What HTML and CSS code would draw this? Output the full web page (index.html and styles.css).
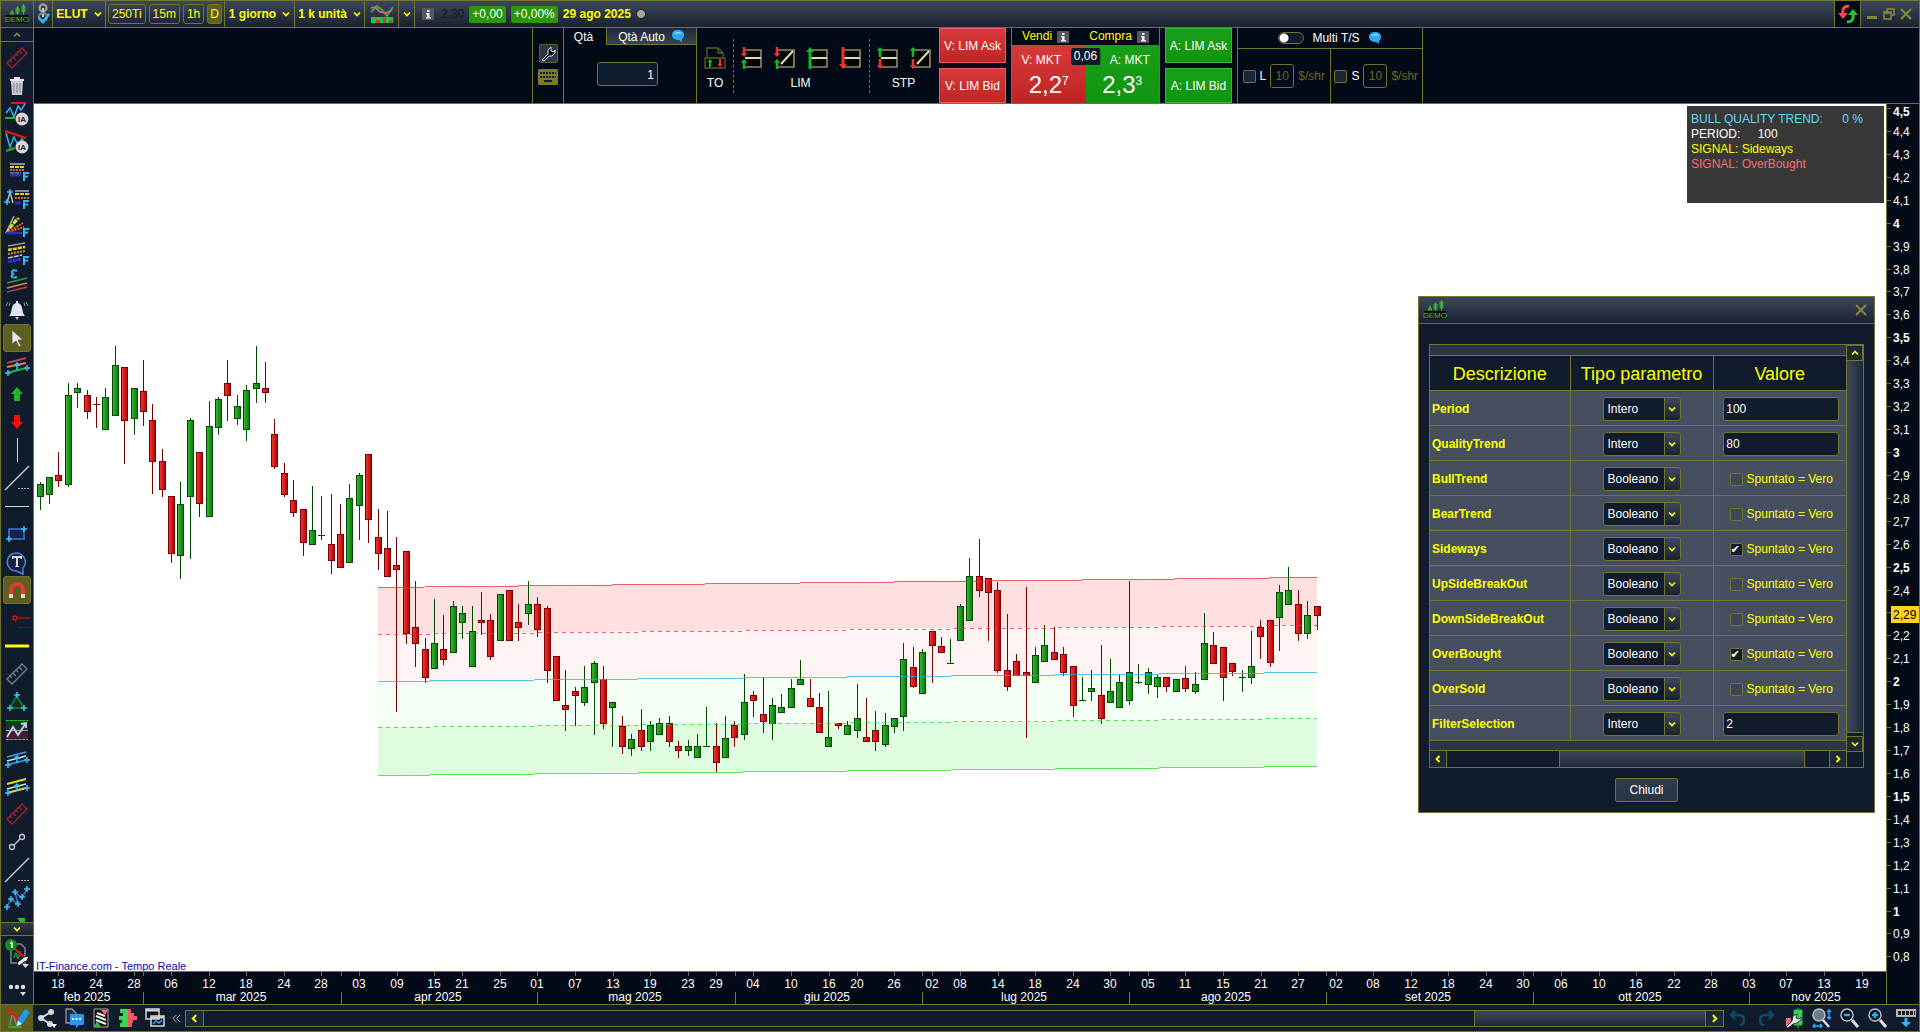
FILE: index.html
```html
<!DOCTYPE html>
<html lang="it">
<head>
    <meta charset="UTF-8">
    <title>ELUT - 1 giorno</title>
    <link rel="stylesheet" href="styles.css">
</head>
<body>
    <svg class="defs" width="0" height="0" aria-hidden="true">
        <defs>
            <linearGradient id="up"><stop offset="0" stop-color="#33b433"/><stop offset="1" stop-color="#0d7d0d"/></linearGradient>
            <linearGradient id="down"><stop offset="0" stop-color="#f03434"/><stop offset="1" stop-color="#b50606"/></linearGradient>
            <symbol id="demo" viewBox="0 0 24 20">
                <path d="M5 10l2-4 2 4zM11 4h3v5h-3zM17 2h3v6h-3zM12.500 2v9M18.500 0v11" fill="#2d8b2d" stroke="#49b749" stroke-width=".8"/>
                <rect x="1" y="11" width="22" height="8" fill="#061006"/>
                <text x="12" y="18" text-anchor="middle" font-size="8" fill="#55c832">DEMO</text>
            </symbol>
            <symbol id="chev" viewBox="0 0 8 8"><path d="M1 2.500l3 3 3-3" fill="none" stroke="#ff0" stroke-width="1.600"/></symbol>
            <symbol id="cross" viewBox="0 0 12 12"><path d="M1 1l10 10M11 1L1 11" stroke="#8a8a3a" stroke-width="2"/></symbol>
            <symbol id="info" viewBox="0 0 12 12"><rect width="12" height="12" fill="#55565e"/><path d="M5 2h2.500v2H5zM4 5h3.500v4H9v1.500H4V9h1V6.500H4z" fill="#eee"/></symbol>
            <symbol id="bubble" viewBox="0 0 14 14"><path d="M7 1c4 0 6 2 6 5 0 2-1 3-2 4v3l-3-2C4 11 1 9 1 6s2-5 6-5z" fill="#2aa9ff"/><path d="M3 5c1-2 6-3 8 0-3-1-5-1-8 0z" fill="#a8e4ff"/></symbol>
            <symbol id="ruler" viewBox="0 0 28 28"><path d="M4 19L19 4l5 5L9 24zM7 16l2 2M10 13l3 3M13 10l2 2M16 7l3 3" fill="none" stroke="currentColor" stroke-width="1.300"/></symbol>
            <symbol id="ia" viewBox="0 0 14 14"><circle cx="7" cy="7" r="6.500" fill="#d5d6dc"/><text x="7" y="10" font-size="8" font-weight="bold" text-anchor="middle" fill="#222">IA</text></symbol>
            <symbol id="f" viewBox="0 0 8 10"><path d="M1 1h6v2H3v1.500h3v2H3V10H1z" fill="#35b6f0"/></symbol>
            <symbol id="plus" viewBox="0 0 6 6"><path d="M3 0v6M0 3h6" stroke="#3cc3f5" stroke-width="1.500"/></symbol>
            <symbol id="au" viewBox="0 0 8 12"><path d="M4 0l4 4.500H5.500V12h-3V4.500H0z" fill="#16b81f"/></symbol>
            <symbol id="ad" viewBox="0 0 8 12"><path d="M4 12L0 7.500h2.500V0h3v7.500H8z" fill="#ee3030"/></symbol>
            <symbol id="box" viewBox="0 0 22 22"><path d="M5 3h16v17H5z" fill="#050604"/><path d="M5 3h16v17H5" fill="none" stroke="#8d8e68" stroke-width="1.600"/></symbol>
        </defs>
    </svg>

    <div class="app">
        <header class="topbar">
            <div class="cell logo"><svg width="24" height="20"><use href="#demo"/></svg></div>
            <div class="cell link">
                <svg width="15" height="22" viewBox="0 0 15 22"><circle cx="7" cy="5" r="3.500" fill="none" stroke="#999" stroke-width="2.500"/><path d="M7 5v9" stroke="#ccc" stroke-width="2"/><circle cx="7" cy="14" r="4" fill="none" stroke="#888" stroke-width="2"/><path d="M3 15l4 4 6-8" fill="none" stroke="#2bbcff" stroke-width="2.500"/></svg>
            </div>
            <button class="cell drop w53">ELUT <svg width="8" height="8"><use href="#chev"/></svg></button>
            <div class="cell frames">
                <button class="frame">250Ti</button>
                <button class="frame">15m</button>
                <button class="frame">1h</button>
                <button class="frame on">D</button>
            </div>
            <button class="cell drop w69">1 giorno <svg width="8" height="8"><use href="#chev"/></svg></button>
            <button class="cell drop w69">1 k unità <svg width="8" height="8"><use href="#chev"/></svg></button>
            <button class="cell style" aria-label="Stile grafico">
                <svg width="24" height="20" viewBox="0 0 24 20"><path d="M1 8l6-6 5 4 5 6 6-9" fill="none" stroke="#2fae50" stroke-width="1.800"/><path d="M1 4l4-1 5 5 6 1 6-3" fill="none" stroke="#ef5a6c" stroke-width="1.800"/><path d="M1 13h22v6H1z" fill="#14c73c"/><path d="M6 16h4v3H6zM13 14h3v5h-3zM19 16h3v3h-3z" fill="#d33"/></svg>
            </button>
            <button class="cell arrow" aria-label="Altri stili"><svg width="8" height="8"><use href="#chev"/></svg></button>
            <div class="quote">
                <svg width="12" height="12"><use href="#info"/></svg>
                <span class="last">2,30</span>
                <span class="chg">+0,00</span>
                <span class="chg">+0,00%</span>
                <b>29 ago 2025</b>
                <span class="dot"></span>
            </div>
            <div class="window-btns">
                <button class="sync" aria-label="Sincronizza"><svg width="20" height="20" viewBox="0 0 20 20"><path d="M11 2C6 2 4 5 5 10" fill="none" stroke="#f2484c" stroke-width="3"/><path d="M0 9h10l-5 6z" fill="#f2484c"/><path d="M9 18c5 0 7-3 6-8" fill="none" stroke="#2bc42b" stroke-width="3"/><path d="M20 11H10l5-6z" fill="#2bc42b"/></svg></button>
                <button aria-label="Riduci"><svg width="12" height="12" viewBox="0 0 12 12"><path d="M1 9.500h10" stroke="#8a8a3a" stroke-width="3"/></svg></button>
                <button aria-label="Ripristina"><svg width="12" height="12" viewBox="0 0 12 12"><path d="M4 4V1h7v6H8M1 4h7v7H1zM1 5h7" fill="none" stroke="#8a8a3a" stroke-width="1.500"/></svg></button>
                <button aria-label="Chiudi finestra"><svg width="12" height="12"><use href="#cross"/></svg></button>
            </div>
        </header>

        <nav class="rail">
            <button class="rail-up" aria-label="Su"><svg width="8" height="8" viewBox="0 0 8 8"><path d="M1 5.500l3-3 3 3" fill="none" stroke="#8a8a3a" stroke-width="1.600"/></svg></button>
            <div class="tools">
                <button class="crimson"><svg><use href="#ruler"/></svg></button>
                <button><svg viewBox="0 0 28 28"><path d="M8 9h12l-1 14H9z" fill="#c9ccd2"/><path d="M7 7h14v2H7zM11 5h6v2h-6z" fill="#e4e6ea"/><path d="M11 11v10M14 11v10M17 11v10" stroke="#777b84"/></svg></button>
                <button><svg viewBox="0 0 28 28"><path d="M8 3h15" stroke="#f11" stroke-width="2"/><path d="M3 13l4-5 4 9 4-11 3 4 4-6" fill="none" stroke="#38b4ee" stroke-width="1.500"/><path d="M2 18h10" stroke="#1db52a" stroke-width="2"/><use href="#ia" x="12" y="12" width="14" height="14"/></svg></button>
                <button><svg viewBox="0 0 28 28"><path d="M3 5l4 14 4-10 4 8 4-6 4 7" fill="none" stroke="#38b4ee" stroke-width="1.500"/><path d="M2 3l21 7" stroke="#f11" stroke-width="2"/><path d="M3 23l9-3" stroke="#1db52a" stroke-width="2"/><use href="#ia" x="12" y="12" width="14" height="14"/></svg></button>
                <button><svg viewBox="0 0 28 28"><path d="M7 8h15" stroke="#8b8b8b" stroke-width="2"/><path d="M7 11h15" stroke="#e8d21c" stroke-width="2" stroke-dasharray="4 1"/><path d="M7 14h15" stroke="#e0661c" stroke-width="2" stroke-dasharray="2 1"/><path d="M7 17h11" stroke="#ccd" stroke-dasharray="4 1"/><path d="M7 19h11" stroke="#2733b8" stroke-width="3"/><use href="#f" x="19" y="15" width="8" height="10"/></svg></button>
                <button><svg viewBox="0 0 28 28"><path d="M12 7h14" stroke="#8b8b8b" stroke-width="2"/><path d="M12 10h14" stroke="#e8d21c" stroke-width="2" stroke-dasharray="4 1"/><path d="M12 14h14" stroke="#e0661c" stroke-width="2" stroke-dasharray="2 1"/><path d="M12 19h6" stroke="#2733b8" stroke-width="3"/><path d="M4 19L7 8l3 11" fill="none" stroke="#bbb" stroke-width="1.500"/><use href="#plus" x="4" y="5" width="6" height="6"/><use href="#plus" x="1" y="15" width="6" height="6"/><use href="#f" x="19" y="15" width="8" height="10"/></svg></button>
                <button><svg viewBox="0 0 28 28"><path d="M3 21L11 4" stroke="#aaa" stroke-width="1.500"/><path d="M3 21L16 6M3 21L14 6" stroke="#e8e01c" stroke-width="2" stroke-dasharray="5 1"/><path d="M3 21l17-10M3 21l18-6" stroke="#e0661c" stroke-width="2" stroke-dasharray="2 1"/><path d="M3 21h16" stroke="#2733b8" stroke-width="2.500"/><use href="#f" x="19" y="15" width="8" height="10"/></svg></button>
                <button><svg viewBox="0 0 28 28"><path d="M5 6l17-3" stroke="#999" stroke-width="1.500"/><path d="M5 10l17-3" stroke="#e8d21c" stroke-width="2.500" stroke-dasharray="4 1"/><path d="M5 14l17-3" stroke="#e8861c" stroke-width="2" stroke-dasharray="2 1"/><path d="M5 18l14-3" stroke="#ccd" stroke-width="1.500" stroke-dasharray="5 1"/><path d="M5 22l13-3" stroke="#2733d8" stroke-width="2.500"/><use href="#f" x="19" y="15" width="8" height="10"/></svg></button>
                <button><svg viewBox="0 0 28 28"><path d="M14 3c-5-2-7 2-3 3-4 1-3 5 3 3" fill="none" stroke="#35b6f0" stroke-width="2"/><path d="M4 15l20-5" stroke="#2ca045" stroke-width="1.600"/><path d="M4 20l20-5" stroke="#ef7d36" stroke-width="1.600"/><path d="M4 24l20-5" stroke="#b8434d" stroke-width="1.600"/></svg></button>
                <button><svg viewBox="0 0 28 28"><path d="M6 20c3-2 2-10 5-12l2-1V5h2v2l2 1c3 2 2 10 5 12z" fill="#dfe5ee"/><path d="M12 21h4l-2 3z" fill="#b5bdc9"/><path d="M5 6L3 10M7 7L6 10M23 6l2 4M21 7l1 3" stroke="#8d96a5"/></svg></button>
                <button class="on"><svg viewBox="0 0 28 28"><path d="M9 6v14l4-3 3 6 2-1-3-6h5z" fill="#e9e9e4" stroke="#555" stroke-width=".8"/></svg></button>
                <button><svg viewBox="0 0 28 28"><path d="M4 11l19-5" stroke="#b8434d" stroke-width="2"/><path d="M4 15l19-4" stroke="#ef7d36" stroke-width="2"/><path d="M4 21l19-5" stroke="#1db52a" stroke-width="2"/><path d="M14 18v-7m-3 3l3-3 3 3" stroke="#3cc3f5" stroke-width="1.500" fill="none"/><use href="#plus" x="2" y="18" width="6" height="6"/><use href="#plus" x="21" y="13" width="6" height="6"/></svg></button>
                <button><svg viewBox="0 0 28 28"><path d="M14 7l6 7h-3v7h-6v-7H8z" fill="#23b52c"/></svg></button>
                <button><svg viewBox="0 0 28 28"><path d="M14 21l-6-7h3V7h6v7h3z" fill="#fb0a0a"/></svg></button>
                <button><svg viewBox="0 0 28 28"><path d="M14.500 2v24" stroke="#d4d4d4"/></svg></button>
                <button><svg viewBox="0 0 28 28"><path d="M2 26L26 2" stroke="#d4d4d4" stroke-width="1.300"/><path d="M15 24.500h11" stroke="#aaa" stroke-dasharray="2 1"/></svg></button>
                <button><svg viewBox="0 0 28 28"><path d="M2 14.500h24" stroke="#d4d4d4"/></svg></button>
                <button><svg viewBox="0 0 28 28"><rect x="6" y="9" width="15" height="10" fill="#12254c" stroke="#4474d8" stroke-width="1.500"/><use href="#plus" x="18" y="6" width="6" height="6"/><use href="#plus" x="3" y="16" width="6" height="6"/></svg></button>
                <button><svg viewBox="0 0 28 28"><path d="M20 20a9 9 0 1 0-7 3l7 3z" fill="#14233d" stroke="#4f7fe0" stroke-width="1.500"/><path d="M9 8h10v3h-1l-1-1h-2v8h1v1h-4v-1h1v-8h-2l-1 1H9z" fill="#ddd"/></svg></button>
                <button class="on"><svg viewBox="0 0 28 28"><path d="M8 18v-4a6 6 0 0 1 12 0v4" fill="none" stroke="#e33b2c" stroke-width="4"/><path d="M6 18h4v4H6zM18 18h4v4h-4z" fill="#ddd"/></svg></button>
                <button><svg viewBox="0 0 28 28"><circle cx="12" cy="14" r="2" fill="none" stroke="#e11" stroke-width="1.300"/><path d="M14 14h13" stroke="#e11"/><path d="M15 23.500h11" stroke="#811" stroke-dasharray="2 1"/></svg></button>
                <button><svg viewBox="0 0 28 28"><path d="M2 14h24" stroke="#ff0" stroke-width="3"/></svg></button>
                <button class="grey"><svg><use href="#ruler"/></svg></button>
                <button><svg viewBox="0 0 28 28"><path d="M13.500 8L7 20h14z" fill="#0c2c1c" stroke="#178a2a" stroke-width="1.500"/><use href="#plus" x="11" y="4" width="6" height="6"/><use href="#plus" x="4" y="17" width="6" height="6"/><use href="#plus" x="18" y="17" width="6" height="6"/></svg></button>
                <button><svg viewBox="0 0 28 28"><path d="M3 5h22v9H3z" fill="#123a24"/><path d="M3 14h22v9H3z" fill="#402030"/><path d="M3 4.500h22" stroke="#2c2" stroke-dasharray="3 1"/><path d="M3 23.500h22" stroke="#f67" stroke-dasharray="3 1"/><path d="M3 14.500h22" stroke="#a9a"/><path d="M4 21l6-10 5 8 8-12m-5 1l5-1v5" fill="none" stroke="#c8ccf0" stroke-width="1.800"/></svg></button>
                <button><svg viewBox="0 0 28 28"><path d="M4 13l19-5M4 21l19-5" stroke="#3c9be0" stroke-width="1.800"/><path d="M4 17l19-5" stroke="#ddd" stroke-width="1.500"/><path d="M14 19v-7m-3 3l3-3 3 3" stroke="#3cc3f5" stroke-width="1.500" fill="none"/><use href="#plus" x="2" y="18" width="6" height="6"/><use href="#plus" x="21" y="13" width="6" height="6"/></svg></button>
                <button><svg viewBox="0 0 28 28"><path d="M4 12l19-5M4 21l19-5" stroke="#dfe01c" stroke-width="2"/><path d="M4 17l19-5" stroke="#ddd" stroke-width="1.500"/><path d="M14 19v-7m-3 3l3-3 3 3" stroke="#3cc3f5" stroke-width="1.500" fill="none"/><use href="#plus" x="2" y="18" width="6" height="6"/><use href="#plus" x="21" y="13" width="6" height="6"/></svg></button>
                <button class="crimson"><svg><use href="#ruler"/></svg></button>
                <button><svg viewBox="0 0 28 28"><g fill="none" stroke="#c9c9c9" stroke-width="1.300"><circle cx="9" cy="19" r="2.500"/><circle cx="19" cy="9" r="2.500"/><path d="M11 17l6-6"/></g></svg></button>
                <button><svg viewBox="0 0 28 28"><path d="M2 26L26 2" stroke="#d4d4d4" stroke-width="1.300"/><path d="M15 24.500h11" stroke="#aaa" stroke-dasharray="2 1"/></svg></button>
                <button><svg viewBox="0 0 28 28"><path d="M4 23l4-8 7 5-3-12 7 6 5-9" fill="none" stroke="#3a76d8" stroke-width="1.500"/><use href="#plus" x="1" y="20" width="6" height="6"/><use href="#plus" x="5" y="12" width="6" height="6"/><use href="#plus" x="12" y="17" width="6" height="6"/><use href="#plus" x="9" y="5" width="6" height="6"/><use href="#plus" x="16" y="10" width="6" height="6"/><use href="#plus" x="21" y="2" width="6" height="6"/></svg></button>
                <button><svg viewBox="0 0 28 28"><path d="M14 6h8v10z" fill="#2cb84a"/></svg></button>
            </div>
            <button class="rail-down" aria-label="Giù"><svg width="8" height="8"><use href="#chev"/></svg></button>
            <div class="rail-end">
                <button><svg viewBox="0 0 28 34"><path d="M8 8h10l4 4v15H8z" fill="none" stroke="#7e858f" stroke-width="1.500"/><path d="M11 22c1-5 2-7 3-2s2 2 3-5" fill="none" stroke="#2a8f45" stroke-width="1.500"/><path d="M12 13l10 9" stroke="#e11" stroke-width="2"/><path d="M14 27l7-6 5-1-2 5-3 1-5 4z" fill="#eee" stroke="#111"/><circle cx="8" cy="9" r="6" fill="#18891f"/><path d="M9 6v6M7 7.500L9 6" stroke="#fff" stroke-width="1.500"/><path d="M19 28h7l-3.500 4z" fill="#ddd"/></svg></button>
                <button><svg viewBox="0 0 28 34"><circle cx="8" cy="17" r="2.200" fill="#ddd"/><circle cx="14" cy="17" r="2.200" fill="#ddd"/><circle cx="20" cy="17" r="2.200" fill="#ddd"/><path d="M17 22h6l-3 4z" fill="#ddd"/></svg></button>
            </div>
        </nav>

        <section class="trade">
            <div class="trade-tools">
                <button class="wrench" aria-label="Impostazioni"><svg width="16" height="16" viewBox="0 0 16 16"><path d="M2 14l6-6V4l3-3v4l3 1 1-2v3l-3 3H9l-5 5z" fill="#05080f" stroke="#e8e8e8"/></svg></button>
                <button class="keys" aria-label="Tastiera"><svg width="20" height="16" viewBox="0 0 20 16"><rect width="20" height="16" rx="2" fill="#7a7a34"/><path d="M2 4h16M2 8h16" stroke="#101b2b" stroke-width="2" stroke-dasharray="2 1"/><path d="M6 12h8" stroke="#101b2b" stroke-width="2"/></svg></button>
            </div>
            <div class="qty">
                <div class="tabs">
                    <button class="tab on">Qtà</button>
                    <button class="tab">Qtà Auto <svg width="14" height="14"><use href="#bubble"/></svg></button>
                </div>
                <input class="qty-box" type="text" value="1" aria-label="Quantità">
            </div>
            <div class="orders">
                <div class="group">
                    <div class="icons"><button aria-label="TO"><svg width="22" height="22" viewBox="0 0 22 22"><path d="M1 11h20v10H1z" fill="#050604"/><path d="M3 11V1h11l5 5v5M14 1v5h5M1 11h20v10H1z" fill="none" stroke="#5c5c28" stroke-width="1.300"/><use href="#au" x="2" y="12" width="8" height="8"/><use href="#ad" x="12" y="12" width="8" height="8"/></svg></button></div>
                    <span>TO</span>
                </div>
                <div class="group sep">
                    <div class="icons">
                        <button aria-label="LIM 1"><svg width="22" height="22"><use href="#box"/><path d="M5 11h16" stroke="#dcdcae" stroke-width="2"/><use href="#ad" x="0" y="0" width="8" height="10"/><use href="#au" x="0" y="12" width="8" height="10"/></svg></button>
                        <button aria-label="LIM 2"><svg width="22" height="22"><use href="#box"/><path d="M8 17L20 4" stroke="#dcdcae" stroke-width="2"/><use href="#ad" x="0" y="0" width="8" height="10"/><use href="#au" x="0" y="12" width="8" height="10"/></svg></button>
                        <button aria-label="LIM 3"><svg width="22" height="22"><use href="#box"/><path d="M5 11h16" stroke="#dcdcae" stroke-width="2"/><path d="M4 0l4 5H5.500v17h-3V5H0z" fill="#16b81f"/></svg></button>
                        <button aria-label="LIM 4"><svg width="22" height="22"><use href="#box"/><path d="M5 11h16" stroke="#dcdcae" stroke-width="2"/><path d="M4 22l-4-5h2.500V0h3v17H8z" fill="#ee3030"/></svg></button>
                    </div>
                    <span>LIM</span>
                </div>
                <div class="group sep">
                    <div class="icons">
                        <button aria-label="STP 1"><svg width="22" height="22"><use href="#box"/><path d="M5 11h16" stroke="#dcdcae" stroke-width="2"/><use href="#au" x="0" y="0" width="8" height="10"/><use href="#ad" x="0" y="12" width="8" height="10"/></svg></button>
                        <button aria-label="STP 2"><svg width="22" height="22"><use href="#box"/><path d="M8 17L20 4" stroke="#dcdcae" stroke-width="2"/><use href="#au" x="0" y="0" width="8" height="10"/><use href="#ad" x="0" y="12" width="8" height="10"/></svg></button>
                    </div>
                    <span>STP</span>
                </div>
            </div>
            <div class="pair">
                <button class="sell">V: LIM Ask</button>
                <button class="sell">V: LIM Bid</button>
            </div>
            <div class="market">
                <div class="market-head">
                    <span>Vendi <svg width="12" height="12"><use href="#info"/></svg></span>
                    <span>Compra <svg width="12" height="12"><use href="#info"/></svg></span>
                </div>
                <div class="market-body">
                    <button class="mkt red"><small>V: MKT</small><span class="px">2,2<sup>7</sup></span></button>
                    <button class="mkt green"><small>A: MKT</small><span class="px">2,3<sup>3</sup></span></button>
                    <span class="spread">0,06</span>
                </div>
            </div>
            <div class="pair">
                <button class="buy">A: LIM Ask</button>
                <button class="buy">A: LIM Bid</button>
            </div>
            <div class="multi">
                <div class="multi-head">
                    <label class="switch"><input type="checkbox" aria-label="Multi T/S"><i></i></label>
                    Multi T/S
                    <svg width="14" height="14"><use href="#bubble"/></svg>
                </div>
                <div class="multi-body">
                    <div class="leg"><label><input type="checkbox">L</label><input class="amt" type="text" value="10" aria-label="L"><span>$/shr</span></div>
                    <div class="leg"><label><input type="checkbox">S</label><input class="amt" type="text" value="10" aria-label="S"><span>$/shr</span></div>
                </div>
            </div>
        </section>

        <main class="chart">
            <svg id="plot"></svg>
            <div class="credit">IT-Finance.com - Tempo Reale</div>
            <div class="status">
                <p class="cyan">BULL QUALITY TREND: <span class="pct">0 %</span></p>
                <p>PERIOD: <span class="num">100</span></p>
                <p class="yellow">SIGNAL: Sideways</p>
                <p class="coral">SIGNAL: OverBought</p>
            </div>
        </main>
        <svg id="prices"></svg>
        <svg id="dates"></svg>

        <footer class="bottombar">
            <button class="draw" aria-label="Disegna"><svg width="28" height="24" viewBox="0 0 28 24"><path d="M7 19c1-9 3-14 5-5s2 6 4-3" fill="none" stroke="#888" stroke-width="1.500"/><path d="M5 3l14 14" stroke="#f11" stroke-width="2"/><path d="M5 21h14" stroke="#1c2" stroke-width="1.500"/><path d="M14 20l1-6 7-11 5 3-7 11z" fill="#1b9be8"/><path d="M14 20l1-5 4 3z" fill="#fff"/></svg></button>
            <button aria-label="Condividi"><svg viewBox="0 0 20 20"><path d="M14 4L4 10l9 6" fill="none" stroke="#d8d8d8" stroke-width="2"/><circle cx="14" cy="4" r="3" fill="#d8d8d8"/><circle cx="4" cy="10" r="3" fill="#d8d8d8"/><circle cx="13" cy="16" r="3" fill="#d8d8d8"/><path d="M14 16h6l-3 4z" fill="#eee"/></svg></button>
            <button aria-label="Chat"><svg viewBox="0 0 20 20"><path d="M2 1h6l4 4v10H2z" fill="#1d2c40" stroke="#8c949f" stroke-width="1.300"/><path d="M6 6h13l1 1v9l-1 1h-4l-3 3v-3H6z" fill="#2a97ef"/><path d="M8 11h10" stroke="#fff" stroke-width="2" stroke-dasharray="2 1.500"/></svg></button>
            <button aria-label="Note"><svg viewBox="0 0 20 20"><path d="M3 1h14v18H3z" fill="#141414" stroke="#aaa"/><path d="M6 5l8 3M5 8l10 4M5 12l10 4" stroke="#eee" stroke-width="2"/><path d="M10 2h7l-3 5z" fill="#f26a70"/><path d="M3 19h7l-4-6z" fill="#2ac43a"/></svg></button>
            <button aria-label="Volumi"><svg viewBox="0 0 20 20"><path d="M2 1h8v4H2zM5 5h5v3H5zM1 8h9v4H1zM4 12h6v3H4zM2 15h8v4H2z" fill="#3cd45a"/><path d="M10 1h3v4h-3zM10 5h6v3h-6zM10 8h9v4h-9zM10 12h5v3h-5zM10 15h4v4h-4z" fill="#f0585e"/></svg></button>
            <button aria-label="Finestre"><svg viewBox="0 0 20 20"><path d="M1 1h13v10H1zM6 8h13v10H6z" fill="#0c1522" stroke="#d8d8d8" stroke-width="1.500"/><path d="M1 2.500h13M6 9.500h13" stroke="#d8d8d8" stroke-width="2"/><path d="M8 16l3-3 3 2 3-3" fill="none" stroke="#2aa9ff" stroke-width="1.500"/></svg></button>
            <button class="fold" aria-label="Comprimi"><svg width="10" height="10" viewBox="0 0 10 10"><path d="M5 1L1 5l4 4M9 1L5 5l4 4" fill="none" stroke="#c9c9c9"/></svg></button>
            <div class="scroll">
                <button aria-label="Indietro"><svg width="8" height="8" viewBox="0 0 8 8"><path d="M5.500 1l-3 3 3 3" fill="none" stroke="#ff0" stroke-width="1.800"/></svg></button>
                <div class="track"><div class="thumb"></div></div>
                <button aria-label="Avanti"><svg width="8" height="8" viewBox="0 0 8 8"><path d="M2.500 1l3 3-3 3" fill="none" stroke="#ff0" stroke-width="1.800"/></svg></button>
            </div>
            <div class="zooms">
                <button aria-label="Annulla"><svg viewBox="0 0 20 20"><path d="M7 3L3 7l4 4M4 7h7c7 0 6 9 1 10" fill="none" stroke="#0e4b6b" stroke-width="2.500"/></svg></button>
                <button aria-label="Ripeti"><svg viewBox="0 0 20 20"><path d="M13 3l4 4-4 4M16 7H9c-7 0-6 9-1 10" fill="none" stroke="#0e4b6b" stroke-width="2.500"/></svg></button>
                <button aria-label="Stile candele"><svg viewBox="0 0 20 20"><path d="M10 2h8v15h-8zM14 0v20" fill="#3cd45a" stroke="#22c04a"/><path d="M2 10h5v8H2z" fill="#e66b70"/><path d="M2 19l6-6 1-5 4-2-1 4 3 1 2-2v3l-4 3-4 1-5 4z" fill="#e8e8e8" stroke="#111" stroke-width=".8"/></svg></button>
                <button aria-label="Zoom automatico"><svg viewBox="0 0 20 20"><circle cx="7" cy="7" r="6" fill="#6f7a88" stroke="#b9bfc8" stroke-width="1.500"/><path d="M11 12l6 7" stroke="#ddd" stroke-width="2.500"/><path d="M17 2v9M15 4l2-2 2 2M15 9l2 2 2-2M1 18h9M3 16l-2 2 2 2M8 16l2 2-2 2" fill="none" stroke="#2aa9ff" stroke-width="1.500"/></svg></button>
                <button aria-label="Riduci zoom"><svg viewBox="0 0 20 20"><circle cx="7" cy="7" r="6" fill="#080e18" stroke="#b9bfc8" stroke-width="1.500"/><path d="M12 12l6 7" stroke="#ddd" stroke-width="3"/><path d="M4 7h6" stroke="#2aa9ff" stroke-width="2.500"/></svg></button>
                <button aria-label="Aumenta zoom"><svg viewBox="0 0 20 20"><circle cx="7" cy="7" r="6" fill="#080e18" stroke="#b9bfc8" stroke-width="1.500"/><path d="M12 12l6 7" stroke="#ddd" stroke-width="3"/><path d="M4 7h6M7 4v6" stroke="#2aa9ff" stroke-width="2.500"/></svg></button>
                <button aria-label="Barra"><svg viewBox="0 0 20 20"><rect y="1" width="20" height="8" fill="#b5b5b5"/><path d="M2 5h17" stroke="#222" stroke-width="4" stroke-dasharray="3 1"/><path d="M8.500 10h3v4H15l-5 5-5-5h3.500z" fill="#35b6f0"/></svg></button>
            </div>
        </footer>
    </div>

    <div class="dialog" role="dialog" aria-label="Parametri">
        <div class="dialog-title">
            <svg width="24" height="20"><use href="#demo"/></svg>
            <button aria-label="Chiudi dialogo"><svg width="12" height="12"><use href="#cross"/></svg></button>
        </div>
        <div class="pane">
            <div class="pane-main">
                <table>
                    <thead>
                        <tr><th class="c1">Descrizione</th><th class="c2">Tipo parametro</th><th class="c3">Valore</th></tr>
                    </thead>
                    <tbody>
                        <tr><td>Period</td><td><span class="sel"><select aria-label="Tipo Period"><option>Intero</option></select><svg width="8" height="8"><use href="#chev"/></svg></span></td><td><input class="val" type="text" value="100" aria-label="Period"></td></tr>
                        <tr><td>QualityTrend</td><td><span class="sel"><select aria-label="Tipo QualityTrend"><option>Intero</option></select><svg width="8" height="8"><use href="#chev"/></svg></span></td><td><input class="val" type="text" value="80" aria-label="QualityTrend"></td></tr>
                        <tr><td>BullTrend</td><td><span class="sel"><select aria-label="Tipo BullTrend"><option>Booleano</option></select><svg width="8" height="8"><use href="#chev"/></svg></span></td><td><label class="chk"><input type="checkbox">Spuntato = Vero</label></td></tr>
                        <tr><td>BearTrend</td><td><span class="sel"><select aria-label="Tipo BearTrend"><option>Booleano</option></select><svg width="8" height="8"><use href="#chev"/></svg></span></td><td><label class="chk"><input type="checkbox">Spuntato = Vero</label></td></tr>
                        <tr><td>Sideways</td><td><span class="sel"><select aria-label="Tipo Sideways"><option>Booleano</option></select><svg width="8" height="8"><use href="#chev"/></svg></span></td><td><label class="chk"><input type="checkbox" checked>Spuntato = Vero</label></td></tr>
                        <tr><td>UpSideBreakOut</td><td><span class="sel"><select aria-label="Tipo UpSideBreakOut"><option>Booleano</option></select><svg width="8" height="8"><use href="#chev"/></svg></span></td><td><label class="chk"><input type="checkbox">Spuntato = Vero</label></td></tr>
                        <tr><td>DownSideBreakOut</td><td><span class="sel"><select aria-label="Tipo DownSideBreakOut"><option>Booleano</option></select><svg width="8" height="8"><use href="#chev"/></svg></span></td><td><label class="chk"><input type="checkbox">Spuntato = Vero</label></td></tr>
                        <tr><td>OverBought</td><td><span class="sel"><select aria-label="Tipo OverBought"><option>Booleano</option></select><svg width="8" height="8"><use href="#chev"/></svg></span></td><td><label class="chk"><input type="checkbox" checked>Spuntato = Vero</label></td></tr>
                        <tr><td>OverSold</td><td><span class="sel"><select aria-label="Tipo OverSold"><option>Booleano</option></select><svg width="8" height="8"><use href="#chev"/></svg></span></td><td><label class="chk"><input type="checkbox">Spuntato = Vero</label></td></tr>
                        <tr><td>FilterSelection</td><td><span class="sel"><select aria-label="Tipo FilterSelection"><option>Intero</option></select><svg width="8" height="8"><use href="#chev"/></svg></span></td><td><input class="val" type="text" value="2" aria-label="FilterSelection"></td></tr>
                    </tbody>
                </table>
                <div class="hbar">
                    <button aria-label="Sinistra"><svg width="8" height="8" viewBox="0 0 8 8"><path d="M5.500 1l-3 3 3 3" fill="none" stroke="#ff0" stroke-width="1.800"/></svg></button>
                    <div class="hthumb"></div>
                    <button aria-label="Destra"><svg width="8" height="8" viewBox="0 0 8 8"><path d="M2.500 1l3 3-3 3" fill="none" stroke="#ff0" stroke-width="1.800"/></svg></button>
                </div>
            </div>
            <div class="vbar">
                <button aria-label="Scorri su"><svg width="8" height="8" viewBox="0 0 8 8"><path d="M1 5.500l3-3 3 3" fill="none" stroke="#ff0" stroke-width="1.600"/></svg></button>
                <div class="vthumb"></div>
                <button aria-label="Scorri giù"><svg width="8" height="8"><use href="#chev"/></svg></button>
                <div class="corner"></div>
            </div>
        </div>
        <button class="close">Chiudi</button>
    </div>

    <script src="script.js"></script>
</body>
</html>
```
FILE: styles.css
```css
* {
    box-sizing: border-box;
}

body {
    margin: 0;
    background: #020917;
    color: #fff;
    font: 12px/15px "Liberation Sans", Arial, sans-serif;
}

button, input, select {
    font: inherit;
    color: inherit;
    margin: 0;
    padding: 0;
    border: 0;
    background: none;
}

button {
    cursor: pointer;
    display: flex;
    align-items: center;
    justify-content: center;
}

svg {
    display: block;
    flex: none;
}

.defs {
    position: absolute;
}

.app {
    display: grid;
    grid-template-columns: 33px 1fr 33px;
    grid-template-rows: 27px 76px 1fr 33px 27px;
    height: 100vh;
    min-height: 700px;
    border: 1px solid #73742f;
}

/* top bar */
.topbar {
    grid-column: 1 / -1;
    display: flex;
    background: linear-gradient(#3d485a, #182230);
    border-bottom: 1px solid #73742f;
}

.cell {
    display: flex;
    align-items: center;
    justify-content: center;
    border-right: 1px solid #73742f;
    color: #ff0;
}

.logo {
    width: 33px;
}

.link {
    width: 19px;
}

.drop {
    gap: 6px;
    font-weight: bold;
}

.w53 {
    width: 53px;
}

.w69 {
    width: 70px;
}

.frames {
    gap: 3px;
    width: 119px;
}

.frame {
    height: 20px;
    padding: 0 3px;
    border: 1px solid #73742f;
    border-radius: 3px;
}

.frame.on {
    background: #5e5f1e;
    padding: 0 2px;
}

.style {
    width: 34px;
}

.arrow {
    width: 16px;
}

.quote {
    display: flex;
    align-items: center;
    gap: 5px;
    flex: 1;
    padding-left: 7px;
    color: #ff0;
}

.quote .last {
    color: #0d1826;
    padding: 0 0 0 2px;
}

.chg {
    background: #2a960a;
    color: #fff;
    padding: 1px 3px;
    border-radius: 2px;
}

.dot {
    width: 10px;
    height: 10px;
    border-radius: 50%;
    background: #a4a4a4;
    border: 1px solid #222;
}

.window-btns {
    display: flex;
    padding-right: 5px;
}

.window-btns button {
    width: 17px;
}

.window-btns .sync {
    width: 27px;
    background: #020917;
    border: solid #73742f;
    border-width: 0 1px;
    margin-right: 2px;
}

/* drawing tools */
.rail {
    grid-row: 2 / 5;
    grid-column: 1;
    display: flex;
    flex-direction: column;
    min-height: 0;
    background: #101b2b;
    border-right: 1px solid #73742f;
}

.rail-up {
    height: 14px;
    border-bottom: 1px solid #73742f;
}

.tools {
    flex: 1;
    min-height: 0;
    overflow: hidden;
    padding: 2px 2px 0;
}

.tools button {
    width: 28px;
    height: 28px;
    border-radius: 3px;
}

.tools svg {
    width: 28px;
    height: 28px;
}

.tools .on {
    background: #5e5f1e;
    border: 1px solid #73742f;
}

.crimson {
    color: #b0202c;
}

.grey {
    color: #777f8d;
}

.rail-down {
    height: 14px;
    border: solid #73742f;
    border-width: 1px 0;
    background: linear-gradient(#303b4b, #182230);
}

.rail-end {
    padding: 0 2px;
}

.rail-end svg {
    width: 28px;
    height: 34px;
}

/* trading panel */
.trade {
    grid-column: 2 / -1;
    display: flex;
    padding-left: 498px;
    border-bottom: 1px solid #73742f;
}

.trade-tools {
    width: 32px;
    border: solid #73742f;
    border-width: 0 1px;
    display: flex;
    flex-direction: column;
    align-items: center;
    gap: 6px;
    padding-top: 16px;
}

.wrench {
    width: 19px;
    height: 19px;
    background: #2c3747;
    border: 1px solid #5e5f2a;
    border-radius: 2px;
}

.qty {
    width: 133px;
    border-right: 1px solid #73742f;
}

.tabs {
    display: flex;
}

.tab {
    flex: 1;
    height: 17px;
    padding-top: 2px;
    gap: 6px;
    background: linear-gradient(#1e2938, #38444f);
    border: solid #73742f;
    border-width: 0 0 1px 1px;
}

.tab svg {
    margin-top: -3px;
}

.tab.on {
    flex: none;
    width: 42px;
    padding-right: 3px;
    border: 0;
    background: none;
}

.qty-box {
    display: block;
    width: 61px;
    height: 24px;
    margin: 17px 0 0 33px;
    padding: 2px 3px 0;
    text-align: right;
    background: #101b2b;
    border: 1px solid #73742f;
    border-radius: 3px;
}

.orders {
    display: flex;
    align-items: center;
}

.group {
    height: 54px;
    padding: 8px 7px 0;
    display: flex;
    flex-direction: column;
    align-items: center;
    gap: 7px;
}

.group.sep {
    border-left: 1px dashed #73742f;
    padding: 8px 8px 0 6px;
}

.icons {
    display: flex;
    gap: 11px;
}

.pair {
    width: 67px;
    display: flex;
    flex-direction: column;
    gap: 5px;
}

.pair button {
    flex: 1;
    padding-top: 2px;
}

.sell {
    background: linear-gradient(#d83a3a, #c02424);
    border: 1px solid #f05a5a;
}

.buy {
    background: linear-gradient(#18a018, #129412);
    border: 1px solid #35b635;
}

.market {
    width: 149px;
    margin: 0 5px;
    border: solid #73742f;
    border-width: 0 1px;
}

.market-head {
    display: flex;
    justify-content: space-around;
    height: 17px;
    color: #ff0;
}

.market-head span {
    display: flex;
    align-items: center;
    gap: 5px;
}

.market-body {
    display: flex;
    position: relative;
    height: 58px;
}

.mkt {
    flex: 1;
    flex-direction: column;
    gap: 3px;
    padding-top: 3px;
}

.mkt small {
    font-size: 12px;
    line-height: 15px;
}

.mkt .px {
    font-size: 24px;
    line-height: 28px;
}

.px sup {
    font-size: 12px;
    line-height: 12px;
    vertical-align: 8px;
}

.red {
    background: linear-gradient(#d83a3a, #c02424);
}

.red small {
    margin-right: 15px;
}

.green {
    background: linear-gradient(#18a018, #129412);
}

.green small {
    margin-left: 15px;
}

.spread {
    position: absolute;
    top: 3px;
    left: 50%;
    transform: translateX(-50%);
    padding: 1px 3px;
    background: #0c1a28;
    border-radius: 2px;
}

.multi {
    width: 186px;
    margin-left: 5px;
    border: solid #73742f;
    border-width: 0 1px;
    display: flex;
    flex-direction: column;
}

.multi-head {
    display: flex;
    align-items: center;
    justify-content: center;
    gap: 8px;
    height: 21px;
    border-bottom: 1px solid #73742f;
}

.switch input {
    position: absolute;
    opacity: 0;
}

.switch i {
    display: block;
    width: 26px;
    height: 12px;
    border: 1px solid #73742f;
    border-radius: 6px;
    background: radial-gradient(circle at 5px 5px, #fff 4px, #101b2b 5px);
}

.multi-body {
    display: flex;
    flex: 1;
}

.leg {
    flex: 1;
    display: flex;
    align-items: center;
    justify-content: center;
    gap: 4px;
    color: #6a6b22;
}

.leg + .leg {
    border-left: 1px solid #73742f;
}

.leg label {
    display: flex;
    align-items: center;
    gap: 4px;
    color: #fff;
}

input[type="checkbox"] {
    appearance: none;
    width: 13px;
    height: 13px;
    border: 1px solid #73742f;
    border-radius: 2px;
    background: #1b2635;
}

.amt {
    width: 24px;
    height: 24px;
    text-align: center;
    border: 1px solid #73742f;
    border-radius: 3px;
}

/* chart */
.chart {
    position: relative;
    grid-column: 2;
    min-width: 0;
    min-height: 0;
    overflow: hidden;
    background: #fff;
}

#plot {
    width: 100%;
    height: 100%;
}

.credit {
    position: absolute;
    left: 2px;
    bottom: -3px;
    font-size: 11px;
    color: #0a0aa8;
}

.status {
    position: absolute;
    top: 2px;
    right: 2px;
    width: 197px;
    height: 97px;
    padding: 6px 4px;
    background: #383838;
}

.status p {
    margin: 0;
}

.pct {
    margin-left: 16px;
}

.num {
    margin-left: 14px;
}

.cyan {
    color: #5fd8f5;
}

.yellow {
    color: #ff0;
}

.coral {
    color: #ff6b6b;
}

#prices {
    grid-column: 3;
    grid-row: 3 / 5;
    width: 33px;
    height: 100%;
    border-left: 1px solid #73742f;
    fill: #fff;
}

#dates {
    grid-column: 2;
    grid-row: 4;
    width: 100%;
    height: 33px;
    border-top: 1px solid #73742f;
    fill: #fff;
}

/* bottom bar */
.bottombar {
    grid-column: 1 / -1;
    display: flex;
    align-items: center;
    background: #101b2b;
    border-top: 1px solid #73742f;
}

.bottombar button {
    width: 27px;
}

.bottombar svg {
    width: 20px;
    height: 20px;
}

.bottombar .draw {
    width: 32px;
    height: 26px;
    background: #5e5f1e;
}

.bottombar .draw svg {
    width: 28px;
    height: 24px;
}

.bottombar .fold {
    width: 17px;
}

.bottombar .fold svg, .bottombar .scroll svg {
    width: 9px;
    height: 9px;
}

.scroll {
    flex: 1;
    display: flex;
    height: 17px;
    border: 1px solid #73742f;
}

.bottombar .scroll button {
    width: 17px;
    background: #1e2938;
}

.track {
    flex: 1;
    display: flex;
    justify-content: flex-end;
    border: solid #73742f;
    border-width: 0 1px;
}

.thumb {
    width: 231px;
    border-left: 1px solid #73742f;
    background: linear-gradient(#3d485a, #1e2938);
}

.zooms {
    display: flex;
    gap: 1px;
}

/* parameter dialog */
.dialog {
    position: absolute;
    top: 296px;
    right: 45px;
    width: 457px;
    background: #101b2b;
    border: 1px solid #73742f;
    padding-bottom: 10px;
}

.dialog-title {
    display: flex;
    align-items: center;
    justify-content: space-between;
    height: 27px;
    padding: 0 7px 0 4px;
    background: linear-gradient(#3d485a, #182230);
    border-bottom: 1px solid #73742f;
}

.pane {
    display: flex;
    margin: 20px 10px 10px;
    border: 1px solid #73742f;
}

.pane-main {
    flex: 1;
    padding-top: 10px;
    background: #2b3646;
}

table {
    width: 100%;
    border-collapse: collapse;
    table-layout: fixed;
}

tr {
    height: 35px;
    background: #454f5d;
}

thead tr {
    background: #101b2b;
}

th {
    font-size: 18px;
    font-weight: normal;
    color: #ff0;
}

th, td {
    padding: 2px 2px 0;
    border: 1px solid #73742f;
    text-align: center;
}

th:first-child, td:first-child {
    border-left: 0;
}

th:last-child, td:last-child {
    border-right: 0;
}

td:first-child {
    text-align: left;
    font-weight: bold;
    color: #ff0;
}

td:last-child {
    padding-left: 5px;
}

.c1 {
    width: 140px;
}

.c2 {
    width: 143px;
}

.sel {
    position: relative;
    display: inline-block;
    vertical-align: middle;
}

.sel select {
    display: block;
    appearance: none;
    width: 78px;
    height: 24px;
    padding-left: 4px;
    border: 1px solid #73742f;
    border-radius: 3px;
    background: linear-gradient(90deg, #101b2b 60px, #73742f 60px, #73742f 61px, transparent 61px), linear-gradient(#3d485a, #182230);
}

.sel svg {
    position: absolute;
    top: 8px;
    right: 5px;
    pointer-events: none;
}

.val {
    display: block;
    width: 116px;
    height: 24px;
    margin: 0 auto;
    padding: 0 2px;
    background: #101b2b;
    border: 1px solid #73742f;
    border-radius: 3px;
}

.chk {
    display: flex;
    align-items: center;
    justify-content: center;
    gap: 4px;
    padding-top: 1px;
    color: #ff0;
}

.chk input {
    background: #3c4655;
}

.chk input:checked {
    background: #101b2b;
}

.chk input:checked::before {
    content: "✔";
    display: block;
    font: 11px/11px "DejaVu Sans", sans-serif;
    color: #fff;
}

.hbar {
    display: flex;
    height: 17px;
    margin-top: 9px;
    background: #101b2b;
    border-top: 1px solid #73742f;
}

.hbar button {
    width: 17px;
    background: #1e2938;
    border-right: 1px solid #73742f;
}

.hbar button:last-child {
    border-right: 0;
    border-left: 1px solid #73742f;
}

.hthumb {
    width: 246px;
    margin: 0 auto 0 112px;
    background: linear-gradient(#3d485a, #1e2938);
    border: solid #73742f;
    border-width: 0 1px;
}

.vbar {
    width: 17px;
    display: flex;
    flex-direction: column;
    border-left: 1px solid #73742f;
}

.vbar button {
    height: 16px;
    background: #1e2938;
    border: 1px solid #73742f;
    border-left: 0;
}

.vthumb {
    flex: 1;
    margin-bottom: 3px;
    background: linear-gradient(90deg, #3d485a, #1e2938);
    border-bottom: 1px solid #73742f;
}

.corner {
    height: 15px;
}

.close {
    width: 63px;
    height: 24px;
    margin: 0 auto;
    background: linear-gradient(#303b4b, #2a3544);
    border: 1px solid #73742f;
    border-radius: 2px;
}
```
FILE: script.js
```js
const NS = 'http://www.w3.org/2000/svg';

function add(parent, tag, attrs, text) {
    const el = document.createElementNS(NS, tag);
    for (const k in attrs) el.setAttribute(k, attrs[k]);
    if (text) el.textContent = text;
    parent.appendChild(el);
    return el;
}

// colour, high, body top, body bottom, low
const bars = `
g 378 380 393 406|g 373 373 391 400|r 348 371 377 383|g 279 291 381 383|g 279 284 289 304
r 286 291 308 315|r 293 300 301 324|g 284 293 326 326|g 242 261 312 312|r 263 263 317 360
g 284 284 315 331|r 256 287 308 322|r 300 316 358 390|r 345 357 386 393|r 392 392 450 459
g 378 400 452 475|g 314 316 393 455|r 348 348 400 413|g 297 322 413 413|g 293 295 324 331
r 256 279 292 317|g 291 302 315 321|g 281 286 326 337|g 242 279 285 299|r 258 284 289 299
r 315 330 363 365|r 359 369 391 393|r 376 396 409 413|r 405 405 439 452|g 382 426 441 441
g 392 431 432 436|r 390 440 457 470|r 400 430 464 464|g 380 394 459 459|g 369 371 402 436
r 350 350 416 439|r 405 433 450 466|r 407 444 473 473|r 433 461 466 608|r 447 447 530 540
r 477 523 540 563|r 534 545 574 579|g 495 539 565 565|r 511 545 556 561|g 497 502 549 549
g 502 509 519 535|g 502 527 563 563|r 488 516 519 531|r 510 516 553 556|g 490 490 537 537
r 486 486 537 537|r 500 518 524 537|g 477 500 510 521|r 493 500 526 533|r 502 504 567 579
r 552 552 597 597|r 566 601 606 627|r 583 587 592 622|g 562 583 599 602|g 557 559 579 631
r 562 575 620 625|g 598 598 604 643|r 612 622 643 650|g 630 635 645 652|r 605 626 643 647
g 617 621 638 647|g 614 619 631 631|r 612 619 638 643|r 637 642 647 654|g 636 642 647 652
g 630 642 654 654|g 603 642 643 643|r 619 642 659 668|g 612 634 654 654|r 617 621 634 643
g 570 598 631 636|r 587 591 597 613|r 573 610 618 629|g 594 601 620 636|g 590 603 609 609
g 575 584 604 604|g 556 575 581 581|r 575 594 603 603|r 589 603 629 629|g 587 633 643 643
r 619 619 622 625|g 617 621 631 631|g 580 614 627 634|r 594 633 638 638|r 607 626 638 647
g 609 621 641 643|g 614 614 623 629|g 539 555 613 627|r 543 563 583 584|g 545 548 590 590
r 527 527 542 579|r 533 542 549 549|g 535 559 560 560|g 500 502 537 537|g 454 472 517 517
r 435 472 487 493|r 474 474 489 537|r 478 486 567 569|r 510 566 583 587|r 550 557 572 572
r 483 568 572 634|g 543 551 579 579|g 521 541 558 558|r 523 548 556 556|r 543 550 569 572
r 562 562 602 613|g 573 596 597 597|g 566 584 588 597|r 541 591 615 620|g 555 587 599 599
g 571 578 604 604|g 477 568 597 601|g 560 578 579 580|g 564 568 581 590|g 571 573 583 594
r 573 573 583 588|g 575 575 588 588|r 562 574 585 588|g 568 580 588 590|g 509 539 576 576
r 528 541 560 560|r 543 543 574 597|r 559 559 568 572|g 566 573 574 588|g 527 562 574 580
r 516 523 533 555|r 516 516 559 563|g 481 488 514 547|g 463 486 501 501|r 486 500 530 537
g 497 511 530 535|r 502 502 512 526`.trim().split(/[|\n]/).map(s => s.split(' '));

const plot = document.getElementById('plot');

// regression channel: y at the left and right end of every line
const L = 344, R = 1283;
const lines = [
    [483, 473, '#e33', ''],
    [530, 521, '#e33', '4 4'],
    [577, 568, '#1db4dc', ''],
    [623, 614, '#2d2', '4 4'],
    [671, 662, '#2d2', '']
];
['#ffe0e0', '#fff4f4', '#f4fff6', '#e0fce0'].forEach((fill, i) => {
    const a = lines[i], b = lines[i + 1];
    add(plot, 'polygon', { points: `${L},${a[0]} ${R},${a[1]} ${R},${b[1]} ${L},${b[0]}`, fill });
});

bars.forEach(([c, h, t, b, l], i) => {
    const x = 6 + Math.floor(i * 9.39 + 0.1);
    const edge = c === 'g' ? '#004a00' : '#7d0000';
    add(plot, 'rect', { x, y: h, width: 1, height: l - h, fill: edge });
    add(plot, 'rect', { x: x - 3, y: t, width: 7, height: b - t, fill: edge });
    if (b - t > 2) {
        add(plot, 'rect', { x: x - 2, y: +t + 1, width: 5, height: b - t - 2, fill: c === 'g' ? 'url(#up)' : 'url(#down)' });
    }
});

lines.forEach(([y1, y2, stroke, dash]) => {
    add(plot, 'line', {
        x1: L, y1: y1 + 0.5, x2: R, y2: y2 + 0.5, stroke, opacity: 0.75,
        'stroke-dasharray': dash, 'shape-rendering': 'crispEdges'
    });
});

// price axis
const prices = document.getElementById('prices');
for (let p = 45; p >= 8; p--) {
    const y = Math.round(4 + (45 - p) * 22.93);
    add(prices, 'rect', { x: 0, y, width: 4, height: 1, fill: '#73742f' });
    if (p === 23) continue;
    const label = (p / 10).toString().replace('.', ',');
    add(prices, 'text', { x: 6, y: y + (p === 45 ? 8 : 5), 'font-weight': p % 5 ? 'normal' : 'bold' }, label);
}
add(prices, 'rect', { x: 4, y: 502, width: 28, height: 17, fill: '#ffd21c' });
add(prices, 'text', { x: 6, y: 515, fill: '#000' }, '2,29');

// date axis
const dates = document.getElementById('dates');
const days = [
    [58, '18'], [96, '24'], [134, '28'], [171, '06'], [209, '12'], [246, '18'], [284, '24'], [321, '28'],
    [359, '03'], [397, '09'], [434, '15'], [462, '21'], [500, '25'], [537, '01'], [575, '07'], [613, '13'],
    [650, '19'], [688, '23'], [716, '29'], [753, '04'], [791, '10'], [829, '16'], [857, '20'], [894, '26'],
    [932, '02'], [960, '08'], [998, '14'], [1035, '18'], [1073, '24'], [1110, '30'], [1148, '05'], [1185, '11'],
    [1223, '15'], [1261, '21'], [1298, '27'], [1336, '02'], [1373, '08'], [1411, '12'], [1448, '18'], [1486, '24'],
    [1523, '30'], [1561, '06'], [1599, '10'], [1636, '16'], [1674, '22'], [1711, '28'], [1749, '03'], [1786, '07'],
    [1824, '13'], [1862, '19']
];
days.forEach(([x, d]) => {
    add(dates, 'rect', { x: x - 34, y: 0, width: 1, height: 4, fill: '#73742f' });
    add(dates, 'text', { x: x - 34, y: 16, 'text-anchor': 'middle' }, d);
});
const months = [
    [34, 143, 'feb'], [143, 341, 'mar'], [341, 537, 'apr'], [537, 735, 'mag'], [735, 922, 'giu'],
    [922, 1129, 'lug'], [1129, 1326, 'ago'], [1326, 1533, 'set'], [1533, 1749, 'ott'], [1749, 1886, 'nov']
];
months.forEach(([a, b, m]) => {
    if (a > 34) {
        add(dates, 'rect', { x: a - 34, y: 0, width: 1, height: 4, fill: '#73742f' });
        add(dates, 'rect', { x: a - 34, y: 20, width: 1, height: 13, fill: '#73742f' });
    }
    add(dates, 'text', { x: Math.floor((a + b) / 2) - 35, y: 29, 'text-anchor': 'middle' }, m + ' 2025');
});
```
